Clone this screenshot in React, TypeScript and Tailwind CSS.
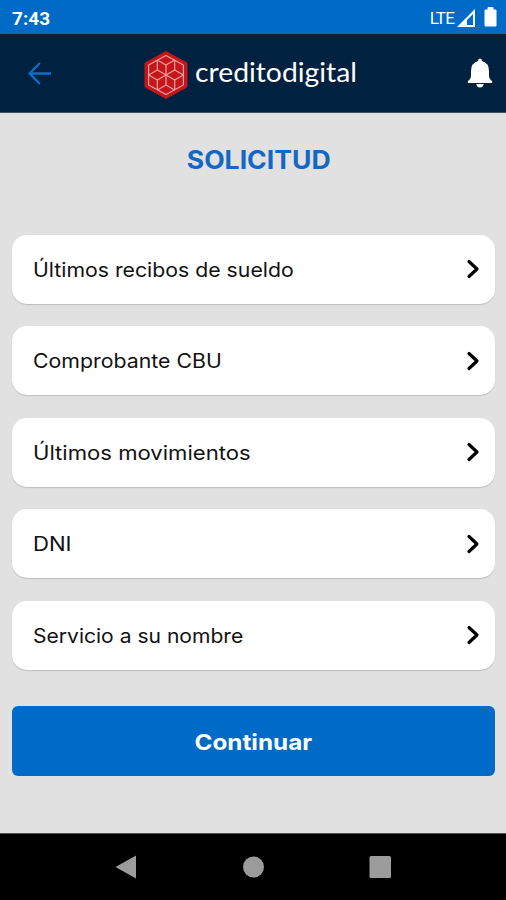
import React from "react";

const items = [
  { label: "Últimos recibos de sueldo", stretch: "scale-x-[1.09]" },
  { label: "Comprobante CBU", stretch: "scale-x-[1.092]" },
  { label: "Últimos movimientos", stretch: "scale-x-[1.133]" },
  { label: "DNI", stretch: "scale-x-[1.134]" },
  { label: "Servicio a su nombre", stretch: "scale-x-[1.08]" },
];

function Logo() {
  return (
    <svg width="44" height="50" viewBox="0 0 44 50" className="shrink-0">
      <path d="M22 1.5 L43 13 V37 L22 48.5 L1 37 V13 Z" fill="#c4161c" stroke="#c4161c" strokeLinejoin="round" />
      <g fill="none" stroke="#f0a09a" strokeWidth="1.2" strokeLinejoin="round">
        <path d="M22 5.500 L39.400 15 V35 L22 44.500 L4.600 35 V15 Z" />
        <path d="M13.3 10 L22 15 L30.7 10 M13.3 40 L22 35 L30.7 40" />
        <path d="M4.6 25 L13.3 20 L22 25 L13.3 30 Z M22 25 L30.7 20 L39.4 25 L30.7 30 Z" />
        <path d="M22 15 V35 M13.3 10 V20 M30.7 10 V20 M13.3 30 V40 M30.7 30 V40" />
      </g>
    </svg>
  );
}

export default function App() {
  return (
    <div className="flex h-[900px] w-[506px] flex-col overflow-hidden bg-[#e1e1e1] font-['Inter',sans-serif]">
      <div className="flex h-[34px] shrink-0 items-center bg-[#006bc6] pl-3 pr-[9px] text-white">
        <span className="pt-[3px] font-['Roboto',sans-serif] text-[19px] font-bold leading-none">7:43</span>
        <span className="ml-auto pt-[2px] font-['Roboto',sans-serif] text-[17px] leading-none tracking-[-0.8px]">LTE</span>
        <svg width="19" height="18" viewBox="0 0 19 18" className="ml-[3px] mt-[1px]">
          <path d="M18 0 V18 H0 Z M16 5 L10 11 V16 H16 Z" fill="#fff" fillRule="evenodd" />
        </svg>
        <svg width="13" height="20" viewBox="0 0 13 20" className="ml-[8px]">
          <path d="M4 0.5 H9 V3 H12 V19 H1 V3 H4 Z" fill="#fff" stroke="#fff" strokeLinejoin="round" />
        </svg>
      </div>

      <header className="flex h-[79px] shrink-0 items-center border-b border-[#48505a] bg-[#00213f] pl-7 pr-[13px]">
        <svg width="24" height="23" viewBox="0 0 24 23" fill="none" stroke="#0b6fc9" strokeWidth="2.3">
          <path d="M23 11.5 H2 M12 1 L1.6 11.5 L12 22" />
        </svg>
        <div className="ml-[92px] flex items-center pt-[3px]">
          <Logo />
          <span className="-mt-[5px] ml-[7px] origin-left scale-x-[1.088] font-['Lato',sans-serif] text-[26px] leading-none text-white">creditodigital</span>
        </div>
        <svg width="26" height="30" viewBox="0 0 26 30" fill="#fff" className="ml-auto">
          <path d="M13 0.5 Q15 0.5 15 3 Q22 5 22 13 V18 Q22 21 25 23 Q26 25 24 25 H2 Q0 25 1 23 Q4 21 4 18 V13 Q4 5 11 3 Q11 0.5 13 0.5 Z M9.3 26 H16.7 Q16 29.5 13 29.5 Q10 29.5 9.3 26 Z" />
        </svg>
      </header>

      <main className="flex h-[720px] shrink-0 flex-col px-[11.5px] pt-[30.5px]">
        <h1 className="flex justify-center pl-[12px] text-[25px] font-bold leading-[32px] text-[#1268c3]">
          <span className="scale-x-[1.063]">SOLICITUD</span>
        </h1>
        <div className="mt-[59px] flex flex-col gap-[22.5px]">
          {items.map((item) => (
            <button key={item.label} className="flex h-[69px] items-center justify-between rounded-[15px] bg-white pl-[21.5px] pr-[15px] shadow-[0_1px_1px_rgba(0,0,0,0.16)]">
              <span className={"origin-left whitespace-nowrap pt-[3px] text-[19.5px] text-[#111] " + item.stretch}>{item.label}</span>
              <svg width="14" height="20" viewBox="0 0 14 20" fill="none" stroke="#000" strokeWidth="3.2" strokeLinecap="round" strokeLinejoin="round">
                <path d="M3 2.5 L11 10 L3 17.5" />
              </svg>
            </button>
          ))}
        </div>
        <button className="mt-[36.5px] flex h-[70px] shrink-0 items-center justify-center rounded-[6px] bg-[#006bc6] pt-[2px] text-[22px] font-bold text-white">
          <span className="scale-x-[1.104]">Continuar</span>
        </button>
      </main>

      <nav className="flex h-[67px] shrink-0 items-center border-t border-[#555] bg-black px-[115px]">
        <svg width="276" height="24" viewBox="0 0 276 24" fill="#9b9b9b">
          <path d="M0.5 12 L21 0.5 V23.5 Z" />
          <circle cx="138.5" cy="12" r="10.5" />
          <rect x="254.5" y="1" width="21.5" height="22" rx="1.5" />
        </svg>
      </nav>
    </div>
  );
}
